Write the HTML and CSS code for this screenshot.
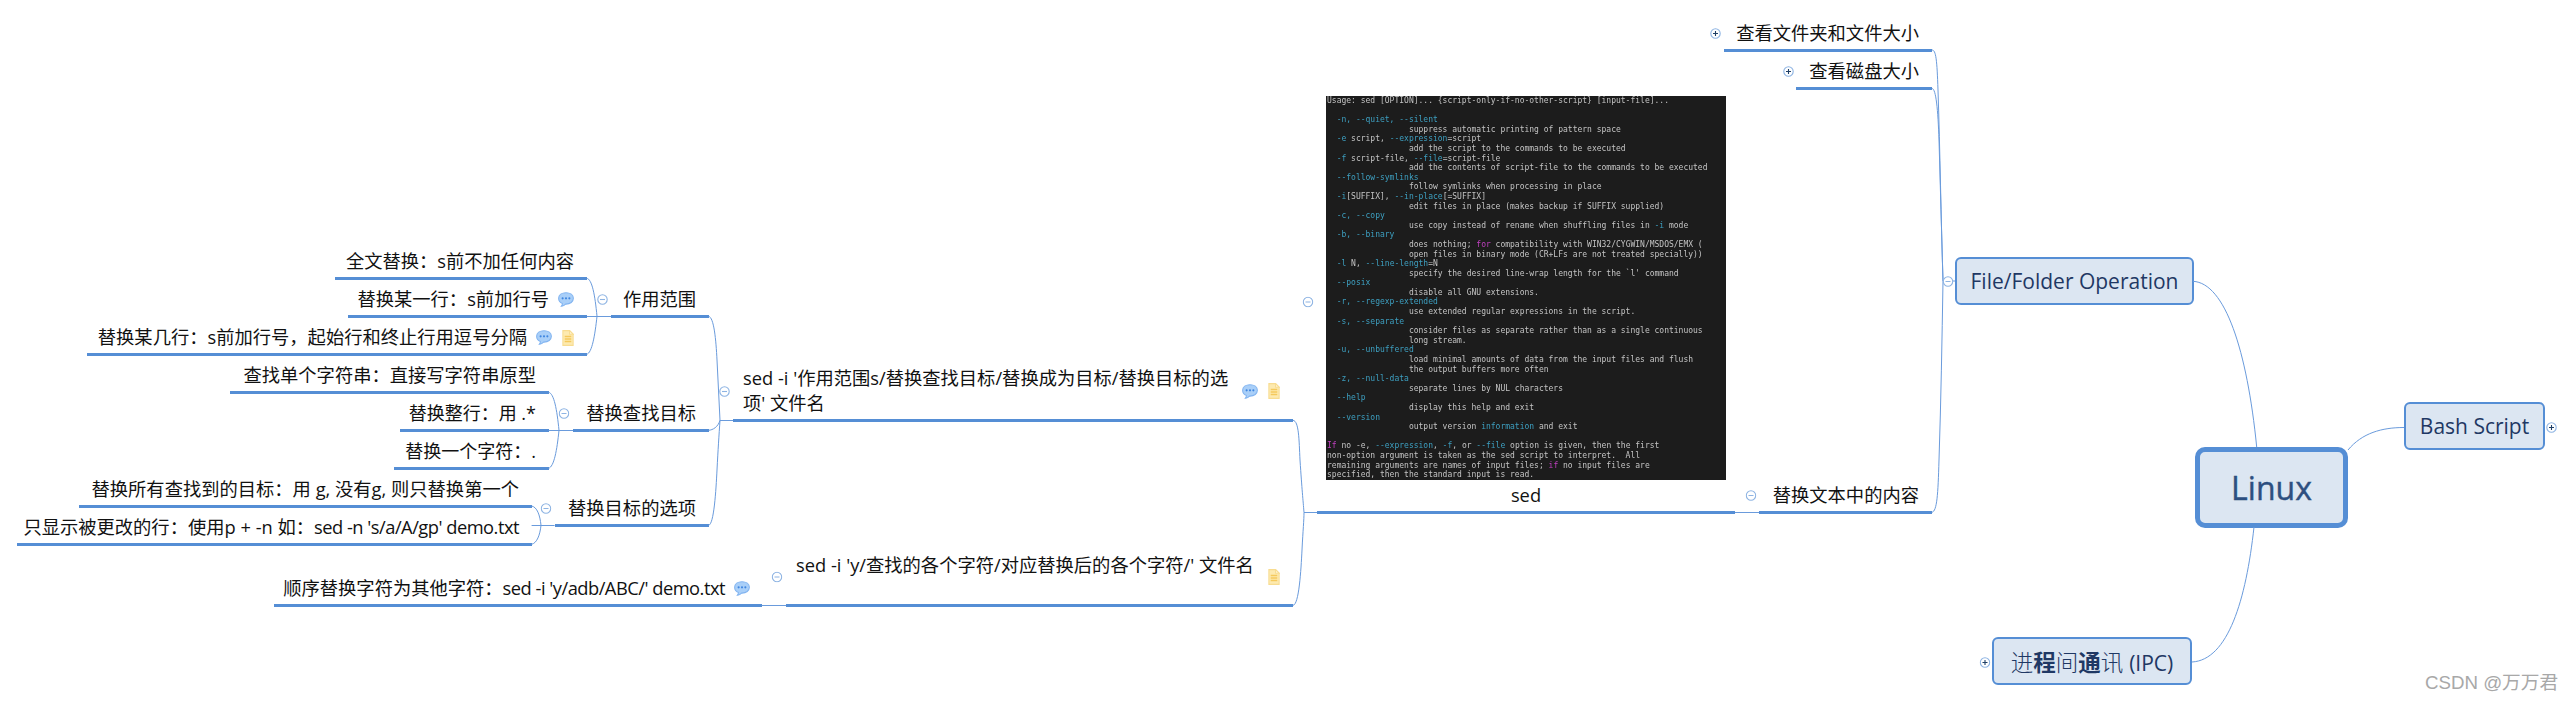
FILE: index.html
```html
<!DOCTYPE html>
<html lang="zh-CN">
<head>
<meta charset="utf-8">
<title>Linux</title>
<link rel="stylesheet" href="styles.css">
</head>
<body>
<svg class="defs" width="0" height="0" aria-hidden="true">
  <symbol id="comment" viewBox="0.4 0.4 15.2 14">
    <path d="M8 1C4 1 1 3 1 6.300c0 2.400 1.500 4.200 3.600 5 0 1-.4 1.800-1 2.600 1.600-.2 3-1 4-2.100h.4c4 0 7-2.200 7-5.500S12 1 8 1z" fill="#a9cff8" stroke="#82b4f0"/>
    <circle cx="4.800" cy="6.300" r="1" fill="#3f86e0"/><circle cx="8" cy="6.300" r="1" fill="#3f86e0"/><circle cx="11.200" cy="6.300" r="1" fill="#3f86e0"/>
  </symbol>
  <symbol id="note" viewBox="0.4 0.2 11.2 15.6">
    <path d="M1 .8h6.500L11 4.300v10.900H1z" fill="#fdeab0" stroke="#f8dc90"/>
    <path d="M7.500 .8v3.500H11z" fill="#fff6d8" stroke="#f8dc90"/>
    <path d="M2.800 6.500h6.400M2.800 9h6.400M2.800 11.500h6.400" stroke="#f5c95c" stroke-width="1.400"/>
  </symbol>
  <symbol id="minus" viewBox="0 0 11 11">
    <circle cx="5.500" cy="5.500" r="4.700" fill="#fff" stroke="#8eb4e3" stroke-width="1.100"/>
    <path d="M3 5.500h5" stroke="#8eb4e3" stroke-width="1.100"/>
  </symbol>
  <symbol id="plus" viewBox="0 0 11 11">
    <circle cx="5.500" cy="5.500" r="4.700" fill="#fff" stroke="#8eb4e3" stroke-width="1.100"/>
    <path d="M3 5.500h5M5.500 3v5" stroke="#1f3f66" stroke-width="1.100"/>
  </symbol>
</svg>

<main class="canvas">
  <div class="box root">Linux</div>
  <div class="box file-folder">File/Folder Operation</div>
  <div class="box bash">Bash Script</div>
  <div class="box ipc"><span class="ipc-text">进<b>程</b>间<b>通</b>讯 <span class="ipc-latin">(IPC)</span></span></div>

  <div class="topic t-size">查看文件夹和文件大小</div>
  <div class="topic t-disk">查看磁盘大小</div>
  <div class="topic t-replace">替换文本中的内容</div>

  <figure class="sed-figure">
<pre class="terminal">Usage: sed [OPTION]... {script-only-if-no-other-script} [input-file]...

  <i>-n, --quiet, --silent</i>
                 suppress automatic printing of pattern space
  <i>-e</i> script, <i>--expression</i>=script
                 add the script to the commands to be executed
  <i>-f</i> script-file, <i>--file</i>=script-file
                 add the contents of script-file to the commands to be executed
  <i>--follow-symlinks</i>
                 follow symlinks when processing in place
  <i>-i</i>[SUFFIX], <i>--in-place</i>[=SUFFIX]
                 edit files in place (makes backup if SUFFIX supplied)
  <i>-c, --copy</i>
                 use copy instead of rename when shuffling files in <i>-i</i> mode
  <i>-b, --binary</i>
                 does nothing; <u>for</u> compatibility with WIN32/CYGWIN/MSDOS/EMX (
                 open files in binary mode (CR+LFs are not treated specially))
  <i>-l</i> N, <i>--line-length</i>=N
                 specify the desired line-wrap length for the `l' command
  <i>--posix</i>
                 disable all GNU extensions.
  <i>-r, --regexp-extended</i>
                 use extended regular expressions in the script.
  <i>-s, --separate</i>
                 consider files as separate rather than as a single continuous
                 long stream.
  <i>-u, --unbuffered</i>
                 load minimal amounts of data from the input files and flush
                 the output buffers more often
  <i>-z, --null-data</i>
                 separate lines by NUL characters
  <i>--help</i>
                 display this help and exit
  <i>--version</i>
                 output version <i>information</i> and exit

<u>If</u> no -e, <i>--expression</i>, <i>-f</i>, or <i>--file</i> option is given, then the first
non-option argument is taken as the sed script to interpret.  All
remaining arguments are names of input files; <u>if</u> no input files are
specified, then the standard input is read.</pre>
  </figure>
  <div class="topic t-sed">sed</div>

  <div class="topic t-s-cmd">
    <span class="wrap-text">sed -i '作用范围s/替换查找目标/替换成为目标/替换目标的选<br>项' 文件名</span>
    <svg class="ic ic-comment"><use href="#comment"/></svg><svg class="ic ic-note"><use href="#note"/></svg>
  </div>
  <div class="topic t-y-cmd">
    <span>sed -i 'y/查找的各个字符/对应替换后的各个字符/' 文件名</span>
    <svg class="ic ic-note"><use href="#note"/></svg>
  </div>

  <div class="topic t-scope">作用范围</div>
  <div class="topic t-find">替换查找目标</div>
  <div class="topic t-opt">替换目标的选项</div>

  <div class="topic t-all">全文替换：s前不加任何内容</div>
  <div class="topic t-one">替换某一行：s前加行号<svg class="ic ic-comment"><use href="#comment"/></svg></div>
  <div class="topic t-some">替换某几行：s前加行号，起始行和终止行用逗号分隔<svg class="ic ic-comment"><use href="#comment"/></svg><svg class="ic ic-note"><use href="#note"/></svg></div>

  <div class="topic t-str">查找单个字符串：直接写字符串原型</div>
  <div class="topic t-line">替换整行：用 .*</div>
  <div class="topic t-char">替换一个字符：.</div>

  <div class="topic t-g">替换所有查找到的目标：用 g, 没有g, 则只替换第一个</div>
  <div class="topic t-p"><span>只显示被更改的行：使用p + -n 如：<span class="tight">sed -n 's/a/A/gp' demo.txt</span></span></div>

  <div class="topic t-seq"><span>顺序替换字符为其他字符：<span class="tight">sed -i 'y/adb/ABC/' demo.txt</span></span><svg class="ic ic-comment"><use href="#comment"/></svg></div>

  <svg class="links" width="2572" height="702" viewBox="0 0 2572 702" aria-hidden="true">
    <g class="lines">
      <path d="M2193 281.300C2225 283 2247 350 2256.700 447"/>
      <path d="M2348 450C2362 433 2382 427.500 2404 427.500"/>
      <path d="M2254 527C2246 600 2228 660 2192 662"/>
      <path d="M1932 50C1936 50 1937 60 1938 90C1940 150 1941 220 1943 281"/>
      <path d="M1932 88.500C1936 88.500 1938 110 1939 140L1943 281"/>
      <path d="M1932 512.300C1937 511 1938 495 1939 460C1941 400 1942 340 1943 281"/>
      <path d="M1943 281H1955"/>
      <path d="M1735 512.500H1759"/>
      <path d="M1293 420.300C1299 421 1299 440 1300 460C1302 490 1303 500 1304 512.300"/>
      <path d="M1293 605.300C1299 605 1301 570 1302 550C1303 530 1304 520 1304 512.300"/>
      <path d="M1304 512.500H1317"/>
      <path d="M708.500 316.300C714 317 716 340 717 360C718 380 719 400 720 420.300"/>
      <path d="M708.500 430.300C713 430 718 427 720 420.300"/>
      <path d="M708.500 525.300C714 525 716 490 717 470C718 450 719 435 720 420.300"/>
      <path d="M720 420.500H733"/>
      <path d="M586.700 278.300C592 279 595 295 597 316.300C595 335 592 353 586.700 354.300"/>
      <path d="M587 316.500H611"/>
      <path d="M548.500 392.300C554 393 557 410 559 430.300C557 450 554 467 548.500 468.300"/>
      <path d="M548.500 430.500H573"/>
      <path d="M531.600 506C537 507 540 515 541 525.300C540 535 537 543 531.600 544.300"/>
      <path d="M531.600 525.500H554.600"/>
      <path d="M761.700 605.500H786"/>
    </g>
    <use href="#plus" x="1710" y="28" width="11" height="11"/>
    <use href="#plus" x="1783" y="66" width="11" height="11"/>
    <use href="#minus" x="1942.500" y="276" width="11" height="11"/>
    <use href="#minus" x="1745.500" y="490" width="11" height="11"/>
    <use href="#minus" x="1302.500" y="296.500" width="11" height="11"/>
    <use href="#minus" x="719" y="386" width="11" height="11"/>
    <use href="#minus" x="771.500" y="571.500" width="11" height="11"/>
    <use href="#minus" x="597" y="294" width="11" height="11"/>
    <use href="#minus" x="558.500" y="408" width="11" height="11"/>
    <use href="#minus" x="540.500" y="503" width="11" height="11"/>
    <use href="#plus" x="2546" y="422" width="11" height="11"/>
    <use href="#plus" x="1979.500" y="657" width="11" height="11"/>
  </svg>

  <div class="watermark">CSDN @万万君</div>
</main>
</body>
</html>
```

FILE: styles.css
```css
* { box-sizing: border-box; }
html, body { margin: 0; padding: 0; background: #fff; }
body { font-family: "Open Sans", "Noto Sans CJK SC", sans-serif; color: #111; overflow: hidden; }
.defs { position: absolute; }

.canvas { position: relative; width: 2572px; height: 702px; overflow: hidden; }
.links { position: absolute; left: 0; top: 0; pointer-events: none; }
.lines path { fill: none; stroke: #6a9bdc; stroke-width: 1; }

/* mind-map topics: place on the canvas, underline at the bottom */
.topic {
  position: absolute;
  height: 34px;
  display: flex;
  align-items: center;
  justify-content: flex-end;
  padding-right: 13px;
  border-bottom: 3px solid #558ed5;
  font-size: 18.3px;
  line-height: 24.5px;
  white-space: nowrap;
}
.tight { letter-spacing: -0.5px; }
.ic { flex: none; }
.ic-comment { width: 16px; height: 15px; margin-left: 9px; }
.ic-note { width: 12px; height: 16px; margin-left: 10px; }

.t-size { left: 1724px; width: 208px; top: 18px; }
.t-disk { left: 1796px; width: 136px; top: 56px; }
.t-replace { left: 1759px; width: 173px; top: 480px; }
.t-sed { left: 1317px; width: 418px; top: 480px; justify-content: center; padding-right: 0; }

.t-s-cmd { left: 733px; width: 560px; top: 362px; height: 60px; justify-content: flex-start; padding: 0 13px 0 10px; }
.t-s-cmd .wrap-text { flex: 1; }
.t-s-cmd .ic { align-self: flex-end; margin-bottom: 20px; }
.t-y-cmd { left: 786px; width: 507px; top: 546px; height: 61px; justify-content: flex-start; padding: 0 13px 0 10px; }
.t-y-cmd span { flex: 1; padding-bottom: 20px; }
.t-y-cmd .ic { align-self: flex-end; margin-bottom: 19px; }

.t-scope { left: 611px; width: 98px; top: 284px; }
.t-find { left: 573px; width: 136px; top: 398px; }
.t-opt { left: 555px; width: 154px; top: 493px; }

.t-all { left: 335px; width: 252px; top: 246px; }
.t-one { left: 348px; width: 239px; top: 284px; }
.t-some { left: 87px; width: 500px; top: 322px; }
.t-str { left: 230px; width: 319px; top: 360px; }
.t-line { left: 400px; width: 149px; top: 398px; font-size: 18px; }
.t-char { left: 394px; width: 155px; top: 436px; font-size: 18px; }
.t-g { left: 79px; width: 453px; top: 474px; }
.t-p { left: 17px; width: 515px; top: 512px; }
.t-seq { left: 274px; width: 488px; top: 573px; padding-right: 12px; }

/* sed help image stand-in */
.sed-figure { position: absolute; left: 1326px; top: 96px; width: 400px; height: 384px; margin: 0; background: #1c1c1c; overflow: hidden; }
.terminal {
  margin: 0;
  padding: 0 0 0 1px;
  font-family: "DejaVu Sans Mono", "Liberation Mono", monospace;
  font-size: 8px;
  line-height: 9.6px;
  color: #c4c4c4;
  filter: blur(0.25px);
}
.terminal i { font-style: normal; color: #3d9fc0; }
.terminal u { text-decoration: none; color: #c040c0; }

/* boxed branches */
.box {
  position: absolute;
  display: flex;
  align-items: center;
  justify-content: center;
  background: #dce6f2;
  border: 2px solid #558ed5;
  border-radius: 6px;
  color: #1f3864;
  font-size: 21px;
  white-space: nowrap;
}
.box b { font-weight: 700; }
.root { left: 2195px; top: 447px; width: 153px; height: 81px; border-width: 5px; border-radius: 10px; font-size: 32px; color: #2d4f80; -webkit-text-stroke: 0.4px #2d4f80; }
.file-folder { left: 1955px; top: 256.500px; width: 239px; height: 48px; }
.bash { left: 2404px; top: 402px; width: 141px; height: 48px; }
.ipc { left: 1992px; top: 637px; width: 200px; height: 48px; }
.ipc-text { font-size: 22.5px; font-weight: 300; }
.ipc-latin { font-size: 21px; font-weight: 400; }

.watermark {
  position: absolute;
  left: 2425px;
  top: 671px;
  font-family: "Liberation Sans", "Noto Sans CJK SC", sans-serif;
  font-size: 18.700px;
  line-height: 24px;
  color: #a8a8a8;
  white-space: nowrap;
}
```
